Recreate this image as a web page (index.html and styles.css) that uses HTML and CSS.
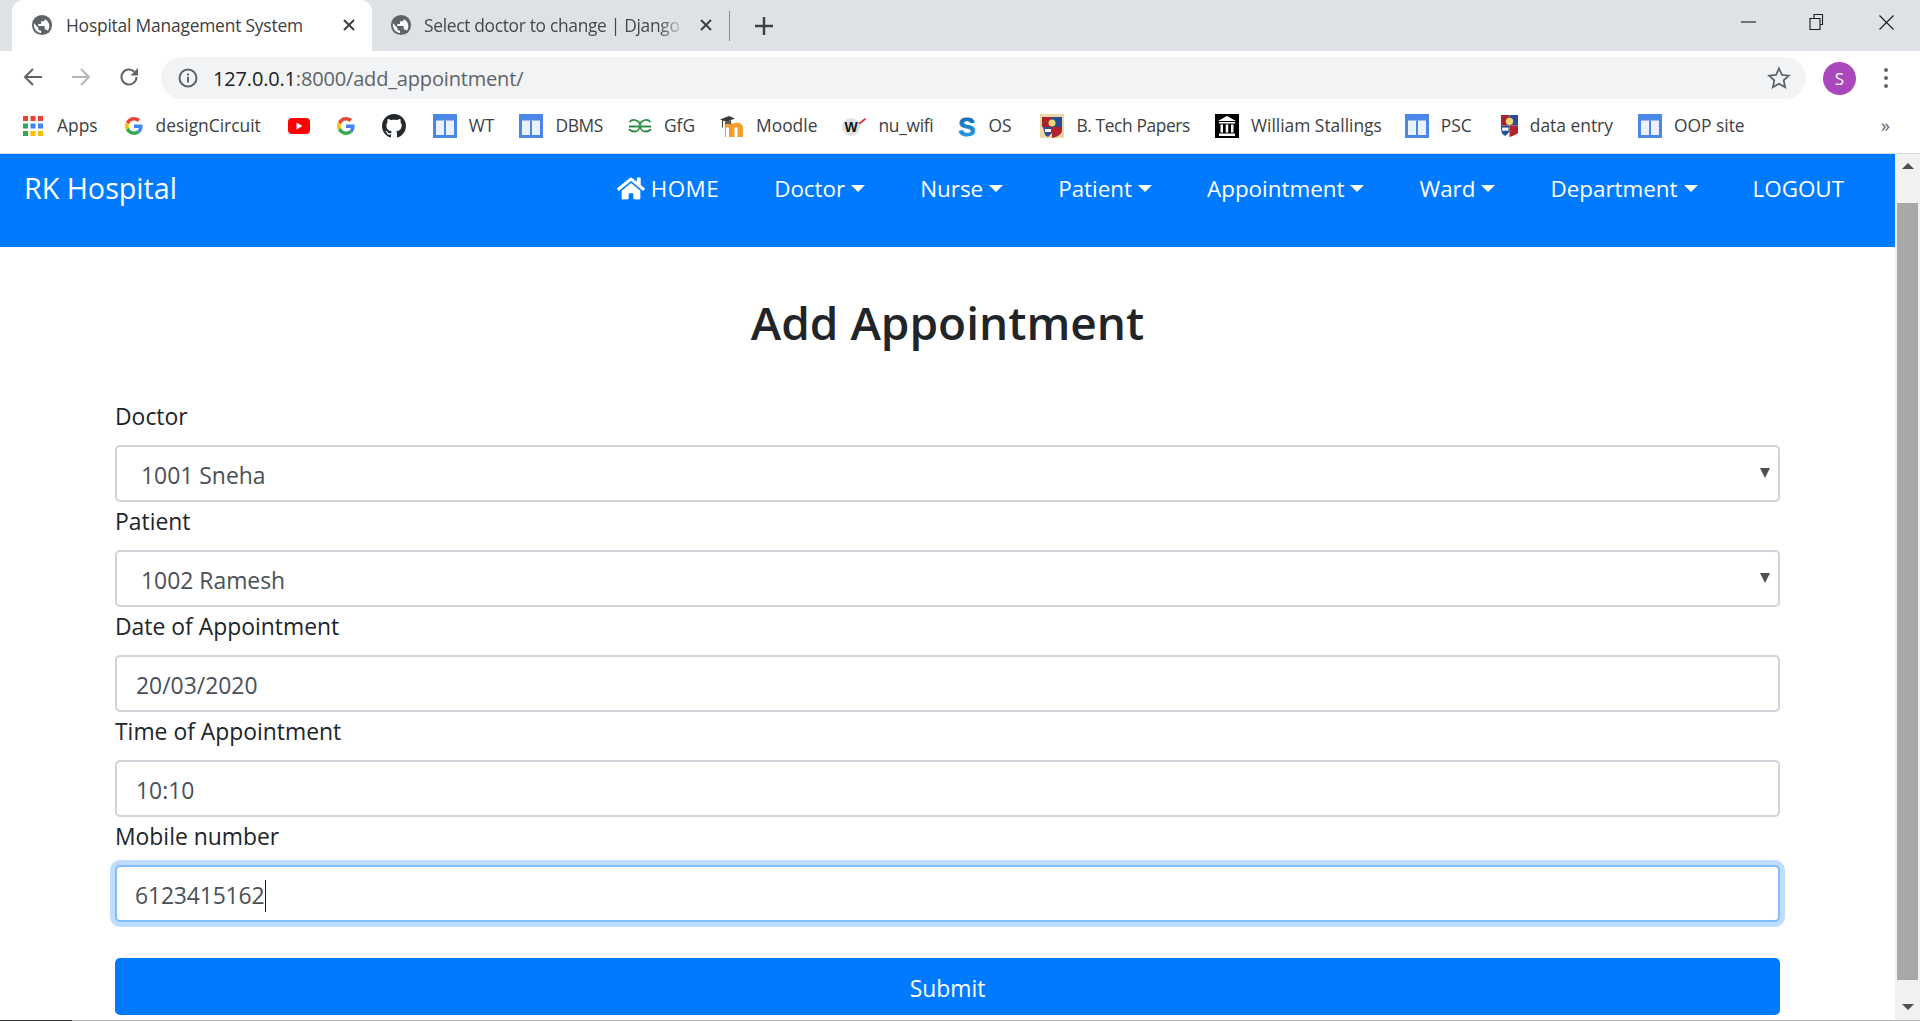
FILE: index.html
```html
<!DOCTYPE html>
<html lang="en">
<head>
<meta charset="utf-8">
<title>Hospital Management System</title>
<link rel="stylesheet" href="styles.css">
</head>
<body>
<svg class="sprite" aria-hidden="true">
  <symbol id="globe" viewBox="0 0 24 24"><circle cx="12" cy="12" r="11" fill="#5f6368"/><path fill="#fff" d="M11 20.9C7 20.4 3.1 16.6 3.1 12c0-.7.1-1.300.2-1.900L8 15v1c0 1.100.9 2 2 2h1zM17.900 18.400c-.3-.8-1-1.400-1.900-1.400h-1v-3c0-.6-.4-1-1-1H8v-2h2c.6 0 1-.4 1-1V8h2c1.100 0 2-.9 2-2v-.4c2.900 1.200 5 4 5 7.400 0 2.100-.8 4-2.100 5.400z"/></symbol>
  <symbol id="g" viewBox="0 0 48 48"><path fill="#ea4335" d="M24 9.500c3.540 0 6.710 1.220 9.210 3.600l6.850-6.850C35.900 2.380 30.470 0 24 0 14.620 0 6.510 5.380 2.560 13.220l7.980 6.190C12.430 13.720 17.740 9.500 24 9.500z"/><path fill="#4285f4" d="M46.980 24.550c0-1.570-.15-3.090-.38-4.550H24v9.020h12.940c-.58 2.960-2.260 5.480-4.780 7.180l7.730 6c4.510-4.180 7.090-10.360 7.090-17.650z"/><path fill="#fbbc05" d="M10.530 28.590c-.48-1.450-.76-2.990-.76-4.590s.27-3.140.76-4.590l-7.980-6.190C.92 16.460 0 20.120 0 24c0 3.880.92 7.540 2.560 10.780l7.970-6.190z"/><path fill="#34a853" d="M24 48c6.480 0 11.930-2.130 15.890-5.810l-7.730-6c-2.150 1.450-4.920 2.300-8.160 2.300-6.260 0-11.570-4.220-13.470-9.910l-7.980 6.190C6.510 42.620 14.620 48 24 48z"/></symbol>
  <symbol id="table" viewBox="0 0 24 24"><rect width="24" height="24" fill="#4a86e8"/><rect x="3" y="6.500" width="18" height="14.500" fill="#eaf1fd"/><rect x="11" y="6.500" width="2" height="14.500" fill="#4a86e8"/></symbol>
  <symbol id="crest" viewBox="0 0 24 24"><path fill="#a9232e" d="M2 3h10v10H2z"/><path fill="#2c4d96" d="M12 3h10v10H12zM3 13h9v6l-4 4-3-2z"/><path fill="#b3222d" d="M12 13h10v4c0 3-5 6-10 7z"/><circle cx="12" cy="9" r="3.500" fill="#f0d774"/><path fill="#fff" d="M5 15h6v3H5z"/></symbol>
</svg>

<div class="tabstrip">
  <div class="tab tab-active">
    <svg class="favicon"><use href="#globe"/></svg>
    <span class="tab-title">Hospital Management System</span>
    <svg class="tab-close" viewBox="0 0 12 12"><path d="M1 1l10 10M11 1L1 11"/></svg>
  </div>
  <div class="tab tab-idle">
    <svg class="favicon"><use href="#globe"/></svg>
    <span class="tab-title tab-title-fade">Select doctor to change | Django</span>
    <svg class="tab-close" viewBox="0 0 12 12"><path d="M1 1l10 10M11 1L1 11"/></svg>
  </div>
  <span class="tab-sep"></span>
  <svg class="tab-new" viewBox="0 0 18 18"><path d="M9 0v18M0 9h18"/></svg>
  <div class="win-controls">
    <svg class="win-min" viewBox="0 0 15 2"><path d="M0 1h15"/></svg>
    <svg class="win-restore" viewBox="0 0 17 16"><path d="M1 4.500h10v11H1zM5 4.500v-4h8.500v10H11"/></svg>
    <svg class="win-close" viewBox="0 0 15 15"><path d="M.5 .5l14 14M14.500 .5l-14 14"/></svg>
  </div>
</div>

<div class="toolbar">
  <svg class="nav-btn" viewBox="0 0 20 20"><path d="M19 10H2M10 2l-8 8 8 8"/></svg>
  <svg class="nav-btn nav-btn-off" viewBox="0 0 20 20"><path d="M1 10h17M10 2l8 8-8 8"/></svg>
  <svg class="nav-btn" viewBox="0 0 20 20"><path d="M17.500 10a7.500 7.500 0 1 1-2.200-5.300"/><path class="solid" d="M19 1v7.500h-7.500z"/></svg>
  <div class="omnibox">
    <svg class="omni-info" viewBox="0 0 20 20"><circle cx="10" cy="10" r="8.500"/><path d="M10 9v5.500M10 5.500v2"/></svg>
    <span class="url"><span class="url-host">127.0.0.1</span>:8000/add_appointment/</span>
    <svg class="omni-star" viewBox="0 0 24 24"><path d="M12 2.500l2.900 6.400 6.900.8-5.100 4.700 1.400 6.900-6.100-3.500-6.100 3.500 1.400-6.900-5.100-4.700 6.900-.8z"/></svg>
  </div>
  <span class="avatar">S</span>
  <span class="kebab"><i></i><i></i><i></i></span>
</div>

<div class="bookmarks">
  <a class="bm bm-lead bm-apps"><svg class="bm-icon" viewBox="0 0 20 20"><g><rect fill="#ea4335" x="0" y="0" width="5" height="5"/><rect fill="#ea4335" x="7.500" y="0" width="5" height="5"/><rect fill="#ea4335" x="15" y="0" width="5" height="5"/><rect fill="#34a853" x="0" y="7.500" width="5" height="5"/><rect fill="#4285f4" x="7.500" y="7.500" width="5" height="5"/><rect fill="#4285f4" x="15" y="7.500" width="5" height="5"/><rect fill="#34a853" x="0" y="15" width="5" height="5"/><rect fill="#fbbc05" x="7.500" y="15" width="5" height="5"/><rect fill="#fbbc05" x="15" y="15" width="5" height="5"/></g></svg>Apps</a>
  <a class="bm bm-lead"><svg class="bm-icon icon-g"><use href="#g"/></svg>designCircuit</a>
  <a class="bm bm-lead bm-yt"><svg class="bm-icon" viewBox="0 0 22 16"><rect width="22" height="16" rx="4" fill="#f00"/><path fill="#fff" d="M8.500 4.500v7l6-3.500z"/></svg></a>
  <a class="bm bm-lead"><svg class="bm-icon icon-g"><use href="#g"/></svg></a>
  <a class="bm bm-lead bm-gh"><svg class="bm-icon" viewBox="0 0 16 16"><path fill="#24292e" d="M8 0C3.580 0 0 3.580 0 8c0 3.540 2.290 6.530 5.470 7.590.4.070.55-.17.55-.38 0-.19-.01-.82-.01-1.490-2.010.37-2.530-.49-2.690-.94-.09-.23-.48-.94-.82-1.130-.28-.15-.68-.52-.01-.53.63-.01 1.080.58 1.230.82.72 1.210 1.870.87 2.330.66.070-.52.28-.87.51-1.070-1.780-.2-3.640-.89-3.640-3.950 0-.87.31-1.590.82-2.150-.08-.2-.36-1.020.08-2.120 0 0 .67-.21 2.200.82.64-.18 1.320-.27 2-.27.68 0 1.360.09 2 .27 1.530-1.040 2.200-.82 2.200-.82.44 1.100.16 1.920.08 2.120.51.56.82 1.270.82 2.150 0 3.070-1.870 3.750-3.650 3.950.29.25.54.73.54 1.480 0 1.070-.01 1.930-.01 2.200 0 .21.15.46.55.38A8.013 8.013 0 0016 8c0-4.420-3.580-8-8-8z"/></svg></a>
  <a class="bm"><svg class="bm-icon"><use href="#table"/></svg>WT</a>
  <a class="bm bm-dbms"><svg class="bm-icon"><use href="#table"/></svg>DBMS</a>
  <a class="bm bm-gfg"><svg class="bm-icon" viewBox="0 0 24 14"><path fill="none" stroke="#2f8d46" stroke-width="1.800" d="M1.500 3C3 1.200 6 .6 8.500 1.500c3 1.200 3.800 3.500 3.500 5.500-.3 3-2.500 5.500-5.500 5.500-2.300 0-4.200-.8-5.500-2.500M22.500 3C21 1.200 18 .6 15.500 1.500c-3 1.200-3.800 3.500-3.500 5.500.3 3 2.500 5.500 5.500 5.500 2.300 0 4.200-.8 5.500-2.500M1 7.500h11M12 7.500h11"/></svg>GfG</a>
  <a class="bm bm-moodle"><svg class="bm-icon" viewBox="0 0 24 24"><path fill="#f2a02b" d="M5 9.500c3-1.500 6-1.500 8 .5 3-2 10-2 10 4v9h-5.500v-8c0-2.500-3-2.500-3 0v8H9v-8c0-2.500-3-2.500-3 0v8H5z"/><path fill="#3a3a3a" d="M0 5.500L9 2l6 2.500-8.500 3.300zM2 6.500v7h1v-7z"/><path fill="#5a5a5a" d="M5 7.500v3c2-1 4-1 6 0V6z"/></svg>Moodle</a>
  <a class="bm bm-wifi"><svg class="bm-icon" viewBox="0 0 24 24"><circle cx="9" cy="13" r="9" fill="#e2e2e2"/><text class="logo-w" x="9" y="18">W</text><path fill="#e8262b" d="M16.500 9l6.500-5 1 1.500-6.500 5z"/></svg>nu_wifi</a>
  <a class="bm bm-os"><svg class="bm-icon icon-s" viewBox="0 0 18 24"><defs><linearGradient id="sgrad" x1="0" y1="0" x2="0" y2="1"><stop offset="0" stop-color="#0d5fa8"/><stop offset="1" stop-color="#2ca7e8"/></linearGradient></defs><text class="logo-s" x="9" y="22" fill="url(#sgrad)">S</text></svg>OS</a>
  <a class="bm bm-papers"><span class="crest-bg"><svg class="crest-mini"><use href="#crest"/></svg></span>B. Tech Papers</a>
  <a class="bm bm-stallings"><svg class="bm-icon" viewBox="0 0 24 24"><rect width="24" height="24" fill="#000"/><path fill="#fff" d="M12 2l9 5H3zM4 8h16v1.500H4zM5.500 10.500h2.500v8H5.500zM10.700 10.500h2.600v8h-2.600zM16 10.500h2.500v8H16zM4 19.500h16V22H4z"/></svg>William Stallings</a>
  <a class="bm bm-psc"><svg class="bm-icon"><use href="#table"/></svg>PSC</a>
  <a class="bm"><svg class="icon-shield" viewBox="4 2 16 22"><use href="#crest" width="24" height="24"/></svg>data entry</a>
  <a class="bm"><svg class="bm-icon"><use href="#table"/></svg>OOP site</a>
  <span class="bm-more">»</span>
</div>

<div class="viewport">
  <div class="page">
    <nav class="navbar">
      <a class="brand">RK Hospital</a>
      <ul class="menu">
        <li class="menu-item menu-home"><svg class="home-icon" viewBox="0 0 576 512"><path fill="currentColor" d="M280.370 148.260L96 300.110V464a16 16 0 0 0 16 16l112.060-.29a16 16 0 0 0 15.920-16V368a16 16 0 0 1 16-16h64a16 16 0 0 1 16 16v95.640a16 16 0 0 0 16 16.050L464 480a16 16 0 0 0 16-16V300L295.670 148.260a12.190 12.190 0 0 0-15.300 0zM571.600 251.470L488 182.560V44.050a12 12 0 0 0-12-12h-56a12 12 0 0 0-12 12v72.610L318.470 43a48 48 0 0 0-61 0L4.340 251.470a12 12 0 0 0-1.600 16.900l25.500 31A12 12 0 0 0 45.150 301l235.220-193.740a12.190 12.190 0 0 1 15.300 0L530.900 301a12 12 0 0 0 16.900-1.600l25.500-31a12 12 0 0 0-1.700-16.930z"/></svg>HOME</li>
        <li class="menu-item has-caret">Doctor</li>
        <li class="menu-item has-caret">Nurse</li>
        <li class="menu-item has-caret">Patient</li>
        <li class="menu-item has-caret">Appointment</li>
        <li class="menu-item has-caret">Ward</li>
        <li class="menu-item has-caret">Department</li>
        <li class="menu-item">LOGOUT</li>
      </ul>
    </nav>
    <main class="content">
      <h1 class="title">Add Appointment</h1>
      <form class="form">
        <div class="group">
          <label class="label">Doctor</label>
          <div class="select-wrap"><select class="control control-select"><option>1001 Sneha</option></select></div>
        </div>
        <div class="group">
          <label class="label">Patient</label>
          <div class="select-wrap"><select class="control control-select"><option>1002 Ramesh</option></select></div>
        </div>
        <div class="group">
          <label class="label">Date of Appointment</label>
          <input class="control" type="text" value="20/03/2020">
        </div>
        <div class="group">
          <label class="label">Time of Appointment</label>
          <input class="control" type="text" value="10:10">
        </div>
        <div class="group">
          <label class="label">Mobile number</label>
          <div class="control control-focus">6123415162<span class="text-caret"></span></div>
        </div>
        <button class="submit" type="button">Submit</button>
      </form>
    </main>
  </div>
  <div class="scrollbar">
    <span class="sb-arrow sb-up"></span>
    <span class="sb-thumb"></span>
    <span class="sb-arrow sb-down"></span>
  </div>
</div>
<div class="bottom-line"><span class="bottom-dark"></span></div>
</body>
</html>
```

FILE: styles.css
```css
* { box-sizing: border-box; }
html, body { margin: 0; height: 100%; overflow: hidden; }
body {
  display: flex;
  flex-direction: column;
  width: 1920px;
  height: 1021px;
  font-family: "Open Sans", "Noto Sans", sans-serif;
  background: #fff;
  color: #212529;
}
.sprite { position: absolute; width: 0; height: 0; }

/* tab strip */
.tabstrip {
  display: flex;
  align-items: center;
  height: 51px;
  flex: none;
  background: #dee1e6;
  color: #3c4043;
  font-size: 17.400px;
}
.tab { display: flex; align-items: center; height: 51px; padding-bottom: 2px; }
.tab-active {
  width: 360px;
  margin-left: 12px;
  padding-left: 19px;
  padding-right: 17px;
  background: #fff;
  border-radius: 12px 12px 0 0;
}
.tab-idle { width: 357px; padding-left: 18px; padding-right: 17px; }
.favicon { width: 22px; height: 22px; flex: none; }
.tab-title { flex: 1; min-width: 0; margin-left: 13px; letter-spacing: -.2px; white-space: nowrap; }
.tab-title-fade {
  margin-left: 12px;
  color: #45494d;
  letter-spacing: -.32px;
  -webkit-mask-image: linear-gradient(90deg, #000 90%, transparent);
  mask-image: linear-gradient(90deg, #000 90%, transparent);
}
.tab-close { width: 12px; height: 12px; flex: none; margin-left: 15px; fill: none; stroke: #3c4043; stroke-width: 2; }
.tab-sep { width: 1px; height: 30px; background: #8b8e92; }
.tab-new { width: 18px; height: 18px; margin-left: 25px; fill: none; stroke: #3c4043; stroke-width: 2.400; }
.win-controls { display: flex; align-items: center; margin-left: auto; padding-right: 26px; height: 51px; margin-top: -7px; }
.win-controls svg { fill: none; stroke: #1b1b1b; stroke-width: 1.100; }
.win-min { width: 15px; height: 2px; }
.win-restore { width: 17px; height: 16px; margin-left: 53px; }
.win-close { width: 15px; height: 15px; margin-left: 53px; }

/* toolbar */
.toolbar { display: flex; align-items: center; flex: none; height: 51px; padding-left: 23px; }
.nav-btn { width: 20px; height: 20px; margin-right: 28px; fill: none; stroke: #5f6368; stroke-width: 2; flex: none; }
.nav-btn-off { stroke: #b4b6b9; }
.nav-btn .solid { fill: #5f6368; stroke: none; }
.nav-btn:nth-child(3) { margin-right: 22px; }
.omnibox {
  display: flex;
  align-items: center;
  width: 1645px;
  height: 42px;
  margin-top: 3px;
  padding: 0 15px 0 17px;
  border-radius: 21px;
  background: #f1f3f4;
}
.omni-info { width: 20px; height: 20px; fill: none; stroke: #5f6368; stroke-width: 2; flex: none; }
.url { margin-left: 15px; font-size: 20px; letter-spacing: -.17px; color: #5f6368; white-space: nowrap; }
.url-host { color: #202124; }
.omni-star { width: 24px; height: 24px; margin-left: auto; fill: none; stroke: #5f6368; stroke-width: 1.800; }
.avatar {
  display: flex; align-items: center; justify-content: center;
  width: 33px; height: 33px; margin: 3px 0 0 17px;
  border-radius: 50%;
  background: #ab47bc; color: #fff; font-size: 17px;
}
.kebab { display: flex; flex-direction: column; gap: 4px; margin: 3px 0 0 28px; }
.kebab i { display: block; width: 4px; height: 4px; border-radius: 50%; background: #5f6368; }

/* bookmarks */
.bookmarks {
  display: flex;
  align-items: center;
  flex: none;
  height: 52px;
  padding: 0 30px 6px 23px;
  border-bottom: 1px solid #dadce0;
  font-size: 17.400px;
  color: #3c4043;
  white-space: nowrap;
}
.bm { display: flex; align-items: center; flex: none; gap: 12px; margin-right: 25px; }
.bm svg, .crest-bg { margin-top: 2px; }
.bm-lead { gap: 13px; margin-right: 27px; }
.bm-icon { width: 24px; height: 24px; flex: none; }
.bm-apps .bm-icon { width: 20px; height: 20px; }
.icon-g { width: 18px; height: 18px; }
.bm-apps { gap: 14px; }
.bm-yt .bm-icon { width: 22px; height: 16px; }
.bm-dbms { letter-spacing: -.4px; }
.bm-gfg .bm-icon { height: 14px; }
.bm-wifi { letter-spacing: -.3px; }
.bm-os { margin-right: 29px; }
.bm-papers { letter-spacing: -.4px; }
.bm-stallings { margin-right: 23px; }
.bm-psc { margin-right: 29px; }
.crest-bg .crest-mini { margin-top: 0; }
.icon-s { width: 18px; }
.logo-w { font: 900 14px "Liberation Sans", sans-serif; text-anchor: middle; fill: #111; }
.logo-s { font: 900 26px "Liberation Sans", sans-serif; text-anchor: middle; stroke: url(#sgrad); stroke-width: .8px; }
.crest-bg { display: flex; width: 24px; height: 24px; background: #ecd9a6; flex: none; }
.crest-mini { width: 24px; height: 24px; }
.icon-shield { width: 17px; height: 23px; flex: none; }
.bm-more { margin-left: auto; font-size: 18px; color: #5f6368; }

/* page frame */
.viewport { display: flex; flex: 1; min-height: 0; }
.page { flex: 1; min-width: 0; overflow: hidden; }
.scrollbar { display: flex; flex-direction: column; align-items: center; width: 25px; background: #f1f1f1; }
.sb-arrow { width: 0; height: 0; border-left: 6px solid transparent; border-right: 6px solid transparent; flex: none; }
.sb-up { margin-top: 9px; border-bottom: 6px solid #505050; }
.sb-down { margin-top: 24px; border-top: 6px solid #505050; }
.sb-thumb { width: 21px; height: 777px; margin-top: 34px; background: #a8a8a8; }
.bottom-line { flex: none; height: 1px; background: #b5b5b5; }
.bottom-dark { display: block; width: 72px; height: 1px; background: #333; }

/* navbar */
.navbar {
  display: flex;
  justify-content: space-between;
  height: 93px;
  padding: 14px 51px 0 24px;
  background: #007bff;
  color: #fff;
}
.brand { font-size: 28.700px; line-height: 40px; white-space: nowrap; }
.menu { display: flex; gap: 55px; margin: 0; padding: 0; list-style: none; }
.menu-item { display: flex; align-items: center; height: 40px; font-size: 22.400px; white-space: nowrap; }
.menu-home { letter-spacing: .5px; }
.home-icon { width: 28px; height: 25px; margin-right: 6px; }
.has-caret::after {
  content: "";
  margin-left: 6px;
  border-top: 7px solid #fff;
  border-left: 7px solid transparent;
  border-right: 7px solid transparent;
}

/* form */
.content { padding: 45px 115px 0; }
.title { margin: 0 0 50px; font-size: 46px; font-weight: 600; line-height: 60px; text-align: center; }
.group { margin-bottom: 5px; }
.label { display: block; margin-bottom: 13px; font-size: 22.900px; line-height: 30px; }
.control {
  display: block;
  width: 100%;
  height: 57px;
  padding: 3px 19px 0;
  border: 2px solid #ced4da;
  border-radius: 5px;
  background: #fff;
  color: #495057;
  font: 22.900px/30px "Open Sans", "Noto Sans", sans-serif;
  outline: none;
}
.control-select { padding-left: 24px; padding-top: 5px; appearance: none; -webkit-appearance: none; }
.select-wrap { position: relative; }
.select-wrap::after {
  content: "";
  position: absolute;
  top: 23px;
  right: 10px;
  border-top: 10px solid #505050;
  border-left: 5px solid transparent;
  border-right: 5px solid transparent;
}
.control-focus {
  display: flex;
  align-items: center;
  border-color: #80bdff;
  box-shadow: 0 0 0 5px #bfdeff;
  padding: 5px 18px 0;
  letter-spacing: -.15px;
}
.text-caret { width: 1px; height: 32px; margin-left: 1px; background: #222; }
.submit {
  display: block;
  width: 100%;
  height: 57px;
  margin-top: 36px;
  padding: 5px 0 0;
  border: 0;
  border-radius: 5px;
  background: #007bff;
  color: #fff;
  font: 22.900px/30px "Open Sans", "Noto Sans", sans-serif;
}
```
